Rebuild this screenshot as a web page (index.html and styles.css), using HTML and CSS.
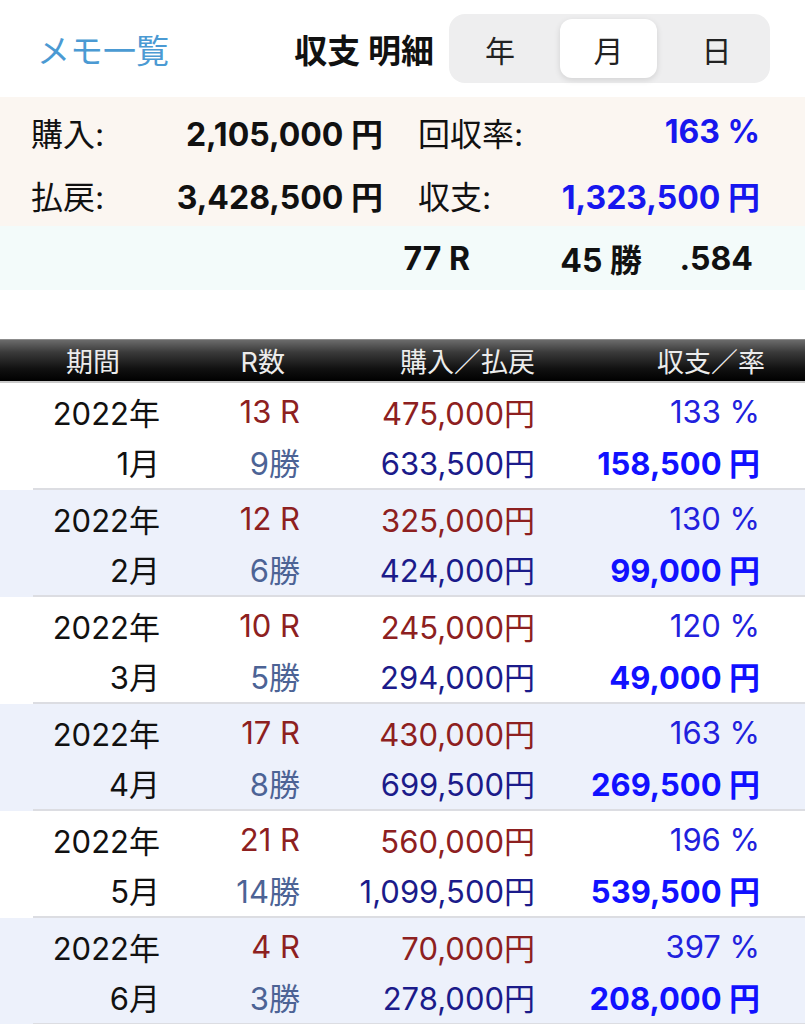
FILE: index.html
```html
<!DOCTYPE html>
<html lang="ja">
<head>
    <meta charset="UTF-8">
    <meta name="viewport" content="width=device-width, initial-scale=1.0">
    <title>収支 明細</title>
    <link rel="stylesheet" href="styles.css">
</head>
<body>

<header class="topbar">
    <a class="memo-link" href="#">メモ一覧</a>
    <h1 class="title">収支 明細</h1>
    <div class="segment">
        <span class="seg">年</span>
        <span class="seg active">月</span>
        <span class="seg">日</span>
    </div>
</header>

<section class="summary">
    <span class="label">購入:</span>
    <span class="value">2,105,000 円</span>
    <span class="label">回収率:</span>
    <span class="value blue">163 %</span>
    <span class="label">払戻:</span>
    <span class="value">3,428,500 円</span>
    <span class="label">収支:</span>
    <span class="value blue">1,323,500 円</span>
</section>

<section class="record">
    <span>77 R</span>
    <span>45 勝</span>
    <span>.584</span>
</section>

<div class="table-head">
    <span>期間</span>
    <span>R数</span>
    <span>購入／払戻</span>
    <span>収支／率</span>
</div>

<div class="rows">
    <div class="row">
        <span>2022年</span><span class="races">13 R</span><span class="buy">475,000円</span><span class="rate">133 %</span>
        <span>1月</span><span class="wins">9勝</span><span class="pay">633,500円</span><span class="net">158,500 円</span>
    </div>
    <div class="row">
        <span>2022年</span><span class="races">12 R</span><span class="buy">325,000円</span><span class="rate">130 %</span>
        <span>2月</span><span class="wins">6勝</span><span class="pay">424,000円</span><span class="net">99,000 円</span>
    </div>
    <div class="row">
        <span>2022年</span><span class="races">10 R</span><span class="buy">245,000円</span><span class="rate">120 %</span>
        <span>3月</span><span class="wins">5勝</span><span class="pay">294,000円</span><span class="net">49,000 円</span>
    </div>
    <div class="row">
        <span>2022年</span><span class="races">17 R</span><span class="buy">430,000円</span><span class="rate">163 %</span>
        <span>4月</span><span class="wins">8勝</span><span class="pay">699,500円</span><span class="net">269,500 円</span>
    </div>
    <div class="row">
        <span>2022年</span><span class="races">21 R</span><span class="buy">560,000円</span><span class="rate">196 %</span>
        <span>5月</span><span class="wins">14勝</span><span class="pay">1,099,500円</span><span class="net">539,500 円</span>
    </div>
    <div class="row">
        <span>2022年</span><span class="races">4 R</span><span class="buy">70,000円</span><span class="rate">397 %</span>
        <span>6月</span><span class="wins">3勝</span><span class="pay">278,000円</span><span class="net">208,000 円</span>
    </div>
</div>

</body>
</html>
```

FILE: styles.css
```css
/* Reset */
* {
    margin: 0;
    padding: 0;
    box-sizing: border-box;
}
body {
    font-family: Inter, 'Noto Sans CJK JP', sans-serif;
    background: #fff;
    color: #111;
    width: 805px;
    overflow: hidden;
}
/* Top bar */
.topbar {
    height: 97px;
    display: flex;
    align-items: center;
    padding: 0 35px 0 37px;
}
.memo-link {
    color: #4b9ad3;
    text-decoration: none;
    font-size: 33px;
    margin-right: auto;
}
.title {
    font-size: 33px;
    font-weight: 700;
    color: #111;
}
.segment {
    margin-left: 15px;
    width: 321px;
    height: 69px;
    padding: 5px;
    background: #eeeeef;
    border-radius: 16px;
    display: grid;
    grid-template-columns: 92px 122px 1fr;
}
.seg {
    display: flex;
    align-items: center;
    justify-content: center;
    font-size: 30px;
    color: #222;
}
.seg.active {
    margin: 0 11px 0 14px;
    background: #fff;
    border-radius: 12px;
    box-shadow: 0 2px 6px rgba(0,0,0,0.12);
}
/* Summary */
.summary {
    background: #fbf6f1;
    padding: 3px 0 0 31px;
    height: 129px;
    display: grid;
    grid-template-columns: 110px 242px 35px 120px 222px;
    grid-auto-rows: 63px;
    align-items: center;
    font-size: 32px;
}
.summary .label:nth-child(4n+3) {
    grid-column: 4;
}
.summary .value {
    text-align: right;
    font-weight: 700;
}
.summary .blue {
    color: #1717ee;
}
.record {
    background: #f3fbfa;
    height: 64px;
    display: grid;
    grid-template-columns: 470px 172px 111px;
    align-items: center;
    text-align: right;
    font-size: 32px;
    font-weight: 700;
}
/* Table */
.table-head {
    margin-top: 49px;
    height: 44px;
    display: grid;
    grid-template-columns: 120px 165px 250px 230px;
    align-items: center;
    text-align: right;
    font-size: 27px;
    color: #ececec;
    background: linear-gradient(#6b6b6b 0%, #3a3a3a 30%, #111 70%, #000 100%);
    border-top: 1px solid #8c8c8c;
    border-bottom: 2px solid #c9c9c9;
}
.row {
    display: grid;
    grid-template-columns: 160px 140px 235px 225px;
    grid-auto-rows: 50px;
    align-items: center;
    text-align: right;
    font-size: 31px;
    padding: 3px 0 2px;
    height: 107px;
    position: relative;
}
.row::after {
    content: '';
    position: absolute;
    left: 33px;
    right: 0;
    bottom: 0;
    height: 2px;
    background: #dcdde2;
}
.row:nth-child(even) {
    background: #edf1fb;
}
.races, .buy {
    color: #8d2020;
}
.wins {
    color: #4c6395;
}
.pay {
    color: #1b1b8a;
}
.rate {
    color: #2121dd;
}
.net {
    color: #1111ff;
    font-weight: 700;
}
```
